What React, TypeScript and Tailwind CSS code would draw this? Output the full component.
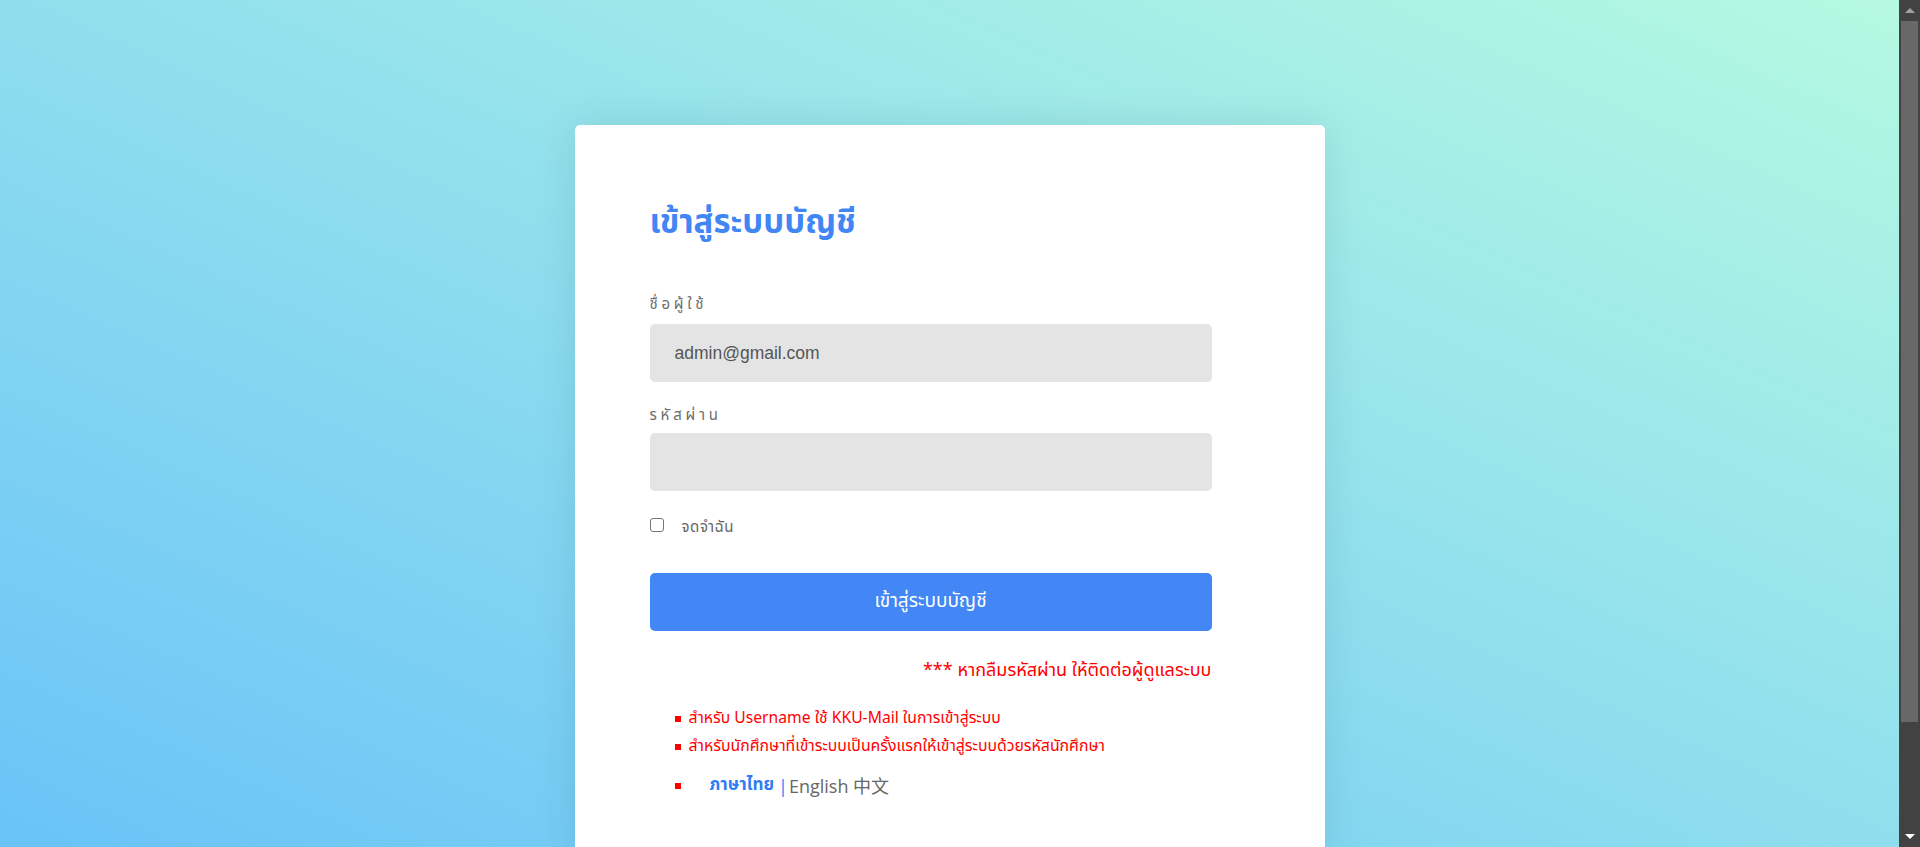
import React from "react";

export default function App() {
  const thai = { fontFamily: '"Noto Sans Thai", "Noto Sans", "Liberation Sans", sans-serif' };
  return (
    <div className="h-[847px] w-full flex overflow-hidden" style={thai}>
      <div className="flex-1 h-full bg-gradient-to-tr from-[#69c3f7] to-[#b5f9e1] flex justify-center pt-[125px] overflow-hidden">
        <div className="w-[750px] h-[731px] shrink-0 bg-white rounded-[5px] shadow-[0_0_40px_rgba(0,60,80,0.12)] pl-[75px] pt-[78px] flex flex-col">
          <h1 className="text-[33px] leading-[40px] font-bold text-[#4286f5] h-[40px]">เข้าสู่ระบบบัญชี</h1>

          <label className="mt-[52px] h-[20px] text-[15px] leading-[20px] tracking-[0.25em] text-[#6e6e6e]">ชื่อผู้ใช้</label>
          <div className="mt-[9px] w-[562px] h-[58px] bg-[#e4e4e4] rounded-[5px] flex items-center pl-[25px]">
            <span className="text-[17.5px] text-[#555555]" style={{ fontFamily: '"Liberation Sans", Arial, sans-serif' }}>
              admin@gmail.com
            </span>
          </div>

          <label className="mt-[24px] h-[20px] text-[15px] leading-[20px] tracking-[0.25em] text-[#6e6e6e]">รหัสผ่าน</label>
          <div className="mt-[7px] w-[562px] h-[58px] bg-[#e4e4e4] rounded-[5px]" />

          <div className="mt-[24px] h-[20px] flex items-center">
            <span className="w-[14px] h-[14px] border border-[#767676] rounded-[3px] bg-white" />
            <span className="ml-[18px] text-[15px] tracking-[0.04em] text-[#666666] mt-[6px]">จดจำฉัน</span>
          </div>

          <div className="mt-[38px] w-[562px] h-[58px] bg-[#4287f5] rounded-[5px] flex items-center justify-center">
            <span className="text-white text-[19px]">เข้าสู่ระบบบัญชี</span>
          </div>

          <div className="mt-[28px] w-[562px] h-[24px] text-right text-[#ff0000] text-[18px] leading-[24px]">
            *** หากลืมรหัสผ่าน ให้ติดต่อผู้ดูแลระบบ
          </div>

          <ul className="mt-[22px] flex flex-col">
            <li className="h-[28px] flex items-center pl-[25px]">
              <span className="w-[6px] h-[6px] bg-[#ff0000] shrink-0" />
              <span className="ml-[8px] text-[15.7px] text-[#ff0000]">สำหรับ Username ใช้ KKU-Mail ในการเข้าสู่ระบบ</span>
            </li>
            <li className="h-[28px] flex items-center pl-[25px]">
              <span className="w-[6px] h-[6px] bg-[#ff0000] shrink-0" />
              <span className="ml-[8px] text-[15.8px] text-[#ff0000]">สำหรับนักศึกษาที่เข้าระบบเป็นครั้งแรกให้เข้าสู่ระบบด้วยรหัสนักศึกษา</span>
            </li>
            <li className="mt-[9px] h-[32px] flex items-center pl-[25px]">
              <span className="w-[6px] h-[6px] bg-[#ff0000] shrink-0" />
              <span className="ml-[29px] text-[17px] font-bold text-[#2f7df6]">ภาษาไทย</span>
              <span className="ml-[4px] text-[18px] text-[#2f7df6]" style={{ fontFamily: '"Open Sans", sans-serif' }}>|</span>
              <span className="ml-[1px] text-[18px] text-[#666666]" style={{ fontFamily: '"Open Sans", "Noto Sans CJK SC", sans-serif' }}>
                English 中文
              </span>
            </li>
          </ul>
        </div>
      </div>

      <div className="w-[21px] h-full bg-[#424242] flex flex-col items-stretch shrink-0">
        <div className="h-[21px] flex items-center justify-center pl-[1px]">
          <svg width="10" height="6" viewBox="0 0 10 6">
            <polygon points="5,0 10,5 0,5" fill="#a3a3a3" />
          </svg>
        </div>
        <div className="ml-[2px] w-[17px] h-[701px] bg-[#686868]" />
        <div className="flex-1" />
        <div className="h-[20px] flex items-center justify-center pl-[1px]">
          <svg width="10" height="6" viewBox="0 0 10 6">
            <polygon points="0,0 10,0 5,5" fill="#ffffff" />
          </svg>
        </div>
      </div>
    </div>
  );
}
